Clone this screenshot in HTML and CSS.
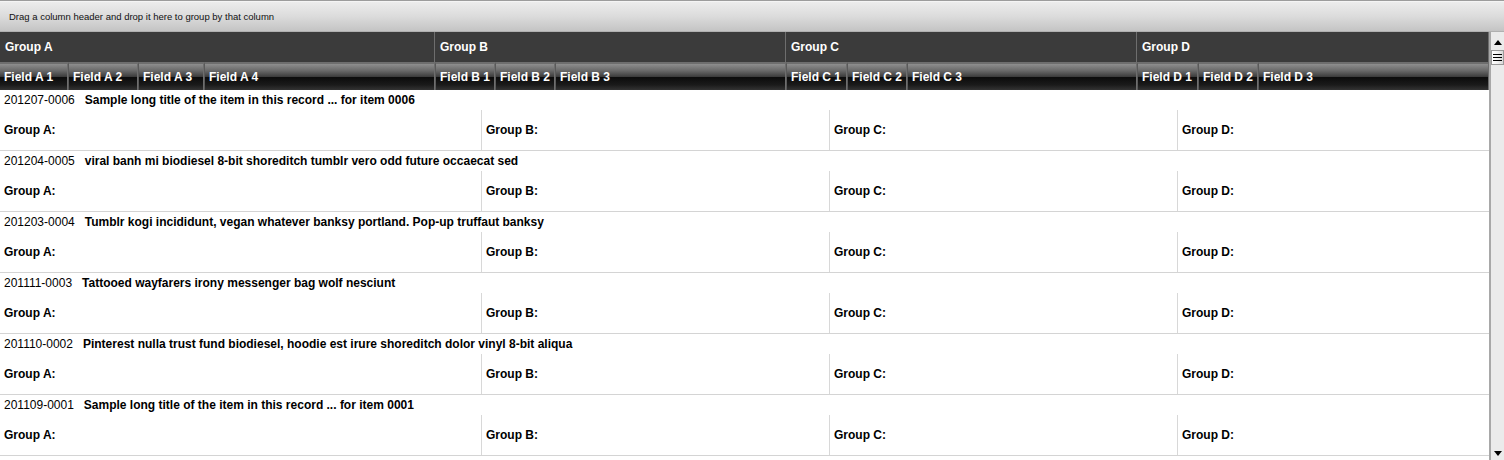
FILE: index.html
```html
<!DOCTYPE html>
<html>
<head>
<meta charset="utf-8">
<link rel="stylesheet" href="styles.css">
</head>
<body>
<div class="groupbar">Drag a column header and drop it here to group by that column</div>
<div class="grid">
  <div class="main">
    <div class="hdr-groups">
      <div class="hg">Group A</div>
      <div class="hg">Group B</div>
      <div class="hg">Group C</div>
      <div class="hg">Group D</div>
    </div>
    <div class="hdr-fields">
      <div class="hf">Field A 1</div>
      <div class="hf">Field A 2</div>
      <div class="hf">Field A 3</div>
      <div class="hf">Field A 4</div>
      <div class="hf">Field B 1</div>
      <div class="hf">Field B 2</div>
      <div class="hf">Field B 3</div>
      <div class="hf">Field C 1</div>
      <div class="hf">Field C 2</div>
      <div class="hf">Field C 3</div>
      <div class="hf">Field D 1</div>
      <div class="hf">Field D 2</div>
      <div class="hf">Field D 3</div>
    </div>
    <div class="rows">
      <div class="record">
        <div class="title"><span class="rid">201207-0006</span><b>Sample long title of the item in this record ... for item 0006</b></div>
        <div class="details"><div class="dc">Group A:</div><div class="dc">Group B:</div><div class="dc">Group C:</div><div class="dc">Group D:</div></div>
      </div>
      <div class="record">
        <div class="title"><span class="rid">201204-0005</span><b>viral banh mi biodiesel 8-bit shoreditch tumblr vero odd future occaecat sed</b></div>
        <div class="details"><div class="dc">Group A:</div><div class="dc">Group B:</div><div class="dc">Group C:</div><div class="dc">Group D:</div></div>
      </div>
      <div class="record">
        <div class="title"><span class="rid">201203-0004</span><b>Tumblr kogi incididunt, vegan whatever banksy portland. Pop-up truffaut banksy</b></div>
        <div class="details"><div class="dc">Group A:</div><div class="dc">Group B:</div><div class="dc">Group C:</div><div class="dc">Group D:</div></div>
      </div>
      <div class="record">
        <div class="title"><span class="rid">201111-0003</span><b>Tattooed wayfarers irony messenger bag wolf nesciunt</b></div>
        <div class="details"><div class="dc">Group A:</div><div class="dc">Group B:</div><div class="dc">Group C:</div><div class="dc">Group D:</div></div>
      </div>
      <div class="record">
        <div class="title"><span class="rid">201110-0002</span><b>Pinterest nulla trust fund biodiesel, hoodie est irure shoreditch dolor vinyl 8-bit aliqua</b></div>
        <div class="details"><div class="dc">Group A:</div><div class="dc">Group B:</div><div class="dc">Group C:</div><div class="dc">Group D:</div></div>
      </div>
      <div class="record">
        <div class="title"><span class="rid">201109-0001</span><b>Sample long title of the item in this record ... for item 0001</b></div>
        <div class="details"><div class="dc">Group A:</div><div class="dc">Group B:</div><div class="dc">Group C:</div><div class="dc">Group D:</div></div>
      </div>
    </div>
  </div>
  <div class="scrollbar">
    <div class="arrow up"></div>
    <div class="thumb"><span></span><span></span><span></span></div>
    <div class="track"></div>
    <div class="arrow down"></div>
  </div>
</div>
</body>
</html>
```

FILE: styles.css
```css
html, body {
  margin: 0;
  padding: 0;
  background: #fff;
}
body {
  width: 1504px;
  height: 460px;
  overflow: hidden;
  font-family: "Liberation Sans", Arial, sans-serif;
  font-size: 12px;
  color: #000;
}
.groupbar {
  height: 30px;
  border-top: 1px solid #9c9c9c;
  box-shadow: inset 0 1px 0 #f4f4f4;
  background: linear-gradient(to bottom, #ededed 0%, #dcdcdc 50%, #c4c4c4 100%);
  border-bottom: 1px solid #b0b0b0;
  font-size: 9.5px;
  line-height: 31px;
  padding-left: 9px;
  color: #111;
}
.grid {
  display: flex;
  height: 428px;
}
.main {
  width: 1489px;
  overflow: hidden;
}
.hdr-groups {
  display: grid;
  grid-template-columns: 435px 351px 351px 352px;
  height: 30px;
  background: #3b3b3b;
}
.hg {
  border-right: 1px solid #6e6e6e;
  color: #fff;
  font-weight: bold;
  line-height: 30px;
  padding-left: 5px;
}
.hdr-fields {
  display: grid;
  grid-template-columns: 68px 70px 66px 231px 60px 60px 231px 61px 60px 230px 61px 60px 231px;
  height: 28px;
}
.hf {
  border-top: 2px solid #6e6e6e;
  border-right: 1px solid #6e6e6e;
  border-left: 1px solid #5a5a5a;
  background: linear-gradient(to bottom, #8e8e8e 0%, #6a6a6a 25%, #3e3e3e 48%, #0c0c0c 52%, #1a1a1a 80%, #333 100%);
  color: #fff;
  font-weight: bold;
  line-height: 26px;
  padding-left: 4px;
  white-space: nowrap;
}
.hf:first-child {
  border-left: none;
}
.record {
  border-bottom: 1px solid #d4d4d4;
}
.title {
  height: 20px;
  line-height: 20px;
  padding-left: 4px;
  white-space: nowrap;
}
.rid {
  margin-right: 10px;
}
.details {
  display: grid;
  grid-template-columns: 481px 348px 348px 312px;
  height: 40px;
}
.dc {
  font-weight: bold;
  line-height: 40px;
  padding-left: 4px;
}
.dc + .dc {
  border-left: 1px solid #d8d8d8;
}
.scrollbar {
  width: 13px;
  border-left: 2px solid #a8a8a8;
  background: #ebebeb;
  display: flex;
  flex-direction: column;
  align-items: center;
}
.arrow {
  width: 0;
  height: 0;
  border-left: 4px solid transparent;
  border-right: 4px solid transparent;
}
.arrow.up {
  margin-top: 8px;
  border-bottom: 5px solid #000;
}
.arrow.down {
  margin-bottom: 4px;
  border-top: 5px solid #000;
}
.thumb {
  margin-top: 5px;
  width: 11px;
  height: 13px;
  border: 1px solid #9a9a9a;
  background: linear-gradient(to right, #fff 0%, #f2f2f2 50%, #d8d8d8 100%);
  display: flex;
  flex-direction: column;
  justify-content: center;
  align-items: center;
  gap: 2px;
}
.thumb span {
  display: block;
  width: 9px;
  height: 1px;
  background: #000;
}
.track {
  flex: 1;
}
```
